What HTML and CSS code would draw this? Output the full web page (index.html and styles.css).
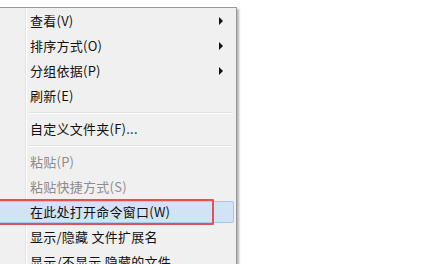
FILE: index.html
```html
<!DOCTYPE html>
<html lang="zh-CN">
<head>
<meta charset="utf-8">
<title>右键菜单</title>
<link rel="stylesheet" href="styles.css">
</head>
<body>
<div class="menu">
  <div class="item"><span class="label">查看(V)</span><span class="arrow"></span></div>
  <div class="item"><span class="label">排序方式(O)</span><span class="arrow"></span></div>
  <div class="item"><span class="label">分组依据(P)</span><span class="arrow"></span></div>
  <div class="item"><span class="label">刷新(E)</span></div>
  <div class="sep"></div>
  <div class="item"><span class="label">自定义文件夹(F)...</span></div>
  <div class="sep"></div>
  <div class="item disabled"><span class="label">粘贴(P)</span></div>
  <div class="item disabled"><span class="label">粘贴快捷方式(S)</span></div>
  <div class="item active"><span class="label">在此处打开命令窗口(W)</span><span class="mark"></span></div>
  <div class="item"><span class="label">显示/隐藏 文件扩展名</span></div>
  <div class="item"><span class="label">显示/不显示 隐藏的文件</span></div>
</div>
</body>
</html>
```
FILE: styles.css
```css
html, body {
  margin: 0;
  padding: 0;
  background: #ffffff;
  overflow: hidden;
  height: 264px;
}
body {
  padding-top: 7px;
  font-family: "Noto Sans CJK SC", "Microsoft YaHei", sans-serif;
  font-size: 13px;
  color: #111111;
}
.menu {
  margin-left: -8px;
  width: 239px;
  padding: 2px;
  border: 1px solid #979797;
  box-shadow: 2px 2px 2px rgba(0, 0, 0, 0.3);
  background-color: #f0f0f0;
  background-image: linear-gradient(to right, transparent 32px, #e2e3e3 32px, #e2e3e3 33px, #ffffff 33px, #ffffff 34px, transparent 34px);
  display: flex;
  flex-direction: column;
}
.item {
  position: relative;
  height: 20px;
  margin-bottom: 3px;
  border: 1px solid transparent;
  border-radius: 2px;
  padding-left: 34px;
  display: flex;
  align-items: center;
  line-height: 20px;
  white-space: nowrap;
}
.label {
  letter-spacing: 0.25px;
}
.item.disabled {
  color: #8d8d8d;
}
.item.active {
  background: #d3e3f6;
  border-color: #a7c7ec;
}
.arrow {
  margin-left: auto;
  margin-right: 10px;
  width: 0;
  height: 0;
  border-left: 4px solid #111111;
  border-top: 4px solid transparent;
  border-bottom: 4px solid transparent;
}
.sep {
  height: 8px;
  margin-left: 34px;
  margin-right: 1px;
  background: linear-gradient(to bottom, transparent 2px, #e0e0e0 2px, #e0e0e0 3px, #ffffff 3px, #ffffff 4px, transparent 4px);
}
.mark {
  position: absolute;
  top: -3px;
  bottom: -3px;
  left: -12px;
  right: 19px;
  border: 2px solid #e25252;
  border-radius: 1px;
}
```
